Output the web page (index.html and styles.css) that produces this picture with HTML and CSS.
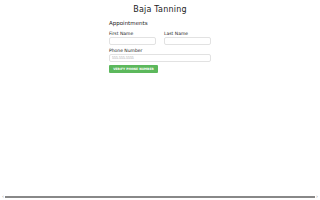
FILE: index.html
```html
<!DOCTYPE html>
<html>
<head>
  <title>Baja Tanning</title>
  <link rel="stylesheet" href="styles.css">
</head>
<body>
  <div class="page">
    <h1 class="title">Baja Tanning</h1>
    <div class="booking">
      <h2>Appointments</h2>
      <form class="verify-form">
        <div class="name-row">
          <div class="field">
            <label for="first-name">First Name</label>
            <input type="text" id="first-name">
          </div>
          <div class="field">
            <label for="last-name">Last Name</label>
            <input type="text" id="last-name">
          </div>
        </div>
        <div class="field">
          <label for="phone">Phone Number</label>
          <input type="tel" id="phone" placeholder="555-555-5555">
        </div>
        <button type="submit" class="verify-button">Verify Phone Number</button>
      </form>
    </div>
  </div>
  <div class="scrollbar">
    <span class="arrow">&#8249;</span>
    <div class="thumb"></div>
    <span class="arrow">&#8250;</span>
  </div>
</body>
</html>
```

FILE: styles.css
```css
html, body {
  margin: 0;
  height: 100%;
}
body {
  font-family: "DejaVu Sans", sans-serif;
  color: #222;
  background-color: #fff;
  display: flex;
  flex-direction: column;
}
.page {
  flex: 1;
}
.title {
  font-size: 8px;
  font-weight: normal;
  text-align: center;
  margin: 5px 0 6px;
  letter-spacing: 0.2px;
}
.booking {
  width: 102px;
  margin: 0 auto;
}
.booking h2 {
  font-size: 5.5px;
  font-weight: normal;
  margin: 0 0 5px;
}
.name-row {
  display: flex;
  justify-content: space-between;
  margin-bottom: 3px;
}
.name-row .field {
  width: 47px;
}
.field label {
  display: block;
  font-size: 4.5px;
  margin-bottom: 1px;
}
.field input {
  display: block;
  box-sizing: border-box;
  width: 100%;
  height: 8px;
  padding: 0 2px;
  font-size: 3.5px;
  border: 0.5px solid #e2e2e2;
  border-radius: 2px;
}
.field input::placeholder {
  color: #aaa;
}
.verify-button {
  display: block;
  margin-top: 3px;
  width: 49px;
  height: 8px;
  padding: 0;
  border: none;
  border-radius: 1px;
  background-color: #5cb85c;
  color: #fff;
  font-family: "DejaVu Sans", sans-serif;
  font-size: 3px;
  font-weight: bold;
  text-transform: uppercase;
}
.scrollbar {
  display: flex;
  align-items: center;
  height: 5px;
  margin-bottom: 1px;
  padding: 0 2px;
  gap: 1px;
}
.scrollbar .arrow {
  font-size: 5px;
  color: #999;
  line-height: 5px;
}
.scrollbar .thumb {
  flex: 1;
  height: 2px;
  background-color: #888;
}
```
